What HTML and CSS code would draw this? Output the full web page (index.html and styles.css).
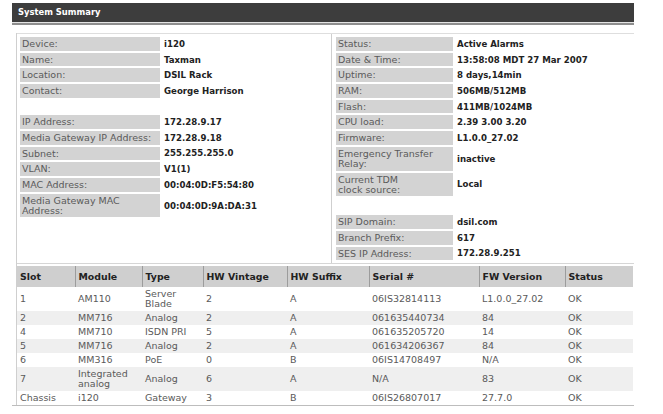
FILE: index.html
```html
<!DOCTYPE html>
<html lang="en">
<head>
  <meta charset="UTF-8" />
  <title>System Summary</title>
  <link rel="stylesheet" href="styles.css">
</head>
<body>
  <div class="page">
    <!-- Title bar -->
    <div class="title-bar">System Summary</div>
    <div class="title-rule"></div>

    <div class="content">
      <!-- Summary panel -->
      <div class="summary">
        <div class="info-col left">
          <div class="label">Device:</div><div class="value">i120</div>
          <div class="label">Name:</div><div class="value">Taxman</div>
          <div class="label">Location:</div><div class="value">DSIL Rack</div>
          <div class="label">Contact:</div><div class="value">George Harrison</div>
          <div class="blank"></div>
          <div class="label">IP Address:</div><div class="value">172.28.9.17</div>
          <div class="label">Media Gateway IP Address:</div><div class="value">172.28.9.18</div>
          <div class="label">Subnet:</div><div class="value">255.255.255.0</div>
          <div class="label">VLAN:</div><div class="value">V1(1)</div>
          <div class="label">MAC Address:</div><div class="value">00:04:0D:F5:54:80</div>
          <div class="label">Media Gateway MAC Address:</div><div class="value">00:04:0D:9A:DA:31</div>
        </div>

        <div class="info-col right">
          <div class="label">Status:</div><div class="value">Active Alarms</div>
          <div class="label">Date &amp; Time:</div><div class="value">13:58:08 MDT 27 Mar 2007</div>
          <div class="label">Uptime:</div><div class="value">8 days,14min</div>
          <div class="label">RAM:</div><div class="value">506MB/512MB</div>
          <div class="label">Flash:</div><div class="value">411MB/1024MB</div>
          <div class="label">CPU load:</div><div class="value">2.39 3.00 3.20</div>
          <div class="label">Firmware:</div><div class="value">L1.0.0_27.02</div>
          <div class="label">Emergency Transfer Relay:</div><div class="value">inactive</div>
          <div class="label">Current TDM<br>clock source:</div><div class="value">Local</div>
          <div class="blank"></div>
          <div class="label">SIP Domain:</div><div class="value">dsil.com</div>
          <div class="label">Branch Prefix:</div><div class="value">617</div>
          <div class="label">SES IP Address:</div><div class="value">172.28.9.251</div>
        </div>
      </div>

      <!-- Modules table -->
      <table class="modules">
        <colgroup>
          <col style="width:58px"><col style="width:67px"><col style="width:61px"><col style="width:84px">
          <col style="width:82px"><col style="width:110px"><col style="width:86px"><col style="width:68px">
        </colgroup>
        <thead>
          <tr>
            <th>Slot</th><th>Module</th><th>Type</th><th>HW Vintage</th>
            <th>HW Suffix</th><th>Serial #</th><th>FW Version</th><th>Status</th>
          </tr>
        </thead>
        <tbody>
          <tr><td>1</td><td>AM110</td><td>Server<br>Blade</td><td>2</td><td>A</td><td>06IS32814113</td><td>L1.0.0_27.02</td><td>OK</td></tr>
          <tr><td>2</td><td>MM716</td><td>Analog</td><td>2</td><td>A</td><td>061635440734</td><td>84</td><td>OK</td></tr>
          <tr><td>4</td><td>MM710</td><td>ISDN PRI</td><td>5</td><td>A</td><td>061635205720</td><td>14</td><td>OK</td></tr>
          <tr><td>5</td><td>MM716</td><td>Analog</td><td>2</td><td>A</td><td>061634206367</td><td>84</td><td>OK</td></tr>
          <tr><td>6</td><td>MM316</td><td>PoE</td><td>0</td><td>B</td><td>06IS14708497</td><td>N/A</td><td>OK</td></tr>
          <tr><td>7</td><td>Integrated<br>analog</td><td>Analog</td><td>6</td><td>A</td><td>N/A</td><td>83</td><td>OK</td></tr>
          <tr><td>Chassis</td><td>i120</td><td>Gateway</td><td>3</td><td>B</td><td>06IS26807017</td><td>27.7.0</td><td>OK</td></tr>
        </tbody>
      </table>
    </div>
    <div class="bottom-rule"></div>
  </div>
</body>
</html>
```

FILE: styles.css
```css
body {
  margin: 0;
  background: #fff;
  font-family: 'DejaVu Sans', Verdana, sans-serif;
  color: #333;
}

.page {
  width: 622px;
  margin: 3px 0 0 12px;
}

/* Title bar */
.title-bar {
  height: 19px;
  line-height: 19px;
  padding-left: 6px;
  background: #3d3d3d;
  color: #fff;
  font-size: 8.4px;
  font-weight: bold;
}

.title-rule {
  height: 2px;
  border-top: 1px solid #e4e4e4;
  background: #8e8e8e;
}

.content {
  margin: 8px 0 0 4px;
  border-left: 1px solid #cfcfcf;
}

/* Summary panel */
.summary {
  display: grid;
  grid-template-columns: 314px 1fr;
  border-top: 1px solid #dedede;
  border-bottom: 1px solid #d6d6d6;
}

.info-col {
  display: grid;
  row-gap: 2px;
  column-gap: 3px;
  align-content: start;
  padding: 3px 3px 3px;
}

.info-col.left {
  grid-template-columns: 140px 1fr;
}

.info-col.right {
  grid-template-columns: 117px 1fr;
  border-left: 1px solid #cfcfcf;
  padding-left: 4px;
}

.label {
  background: #d3d3d3;
  color: #5a5a5a;
  font-size: 9.5px;
  line-height: 10px;
  padding: 2px 2px 1.7px;
}

.value {
  display: flex;
  align-items: center;
  color: #222;
  font-size: 8.6px;
  font-weight: bold;
  padding-left: 1px;
}

.blank {
  grid-column: 1 / -1;
  height: 13.5px;
}

.info-col.right .blank {
  height: 15px;
}

/* Modules table */
.modules {
  width: 616px;
  margin-top: 2px;
  border-collapse: collapse;
  table-layout: fixed;
}

.modules th {
  height: 21px;
  padding: 0 3px;
  background: #cfcfcf;
  border-left: 1px solid #9c9c9c;
  color: #222;
  font-size: 9.4px;
  font-weight: bold;
  text-align: left;
}

.modules th:first-child {
  border-left: none;
}

.modules td {
  padding: 2px 3px;
  line-height: 10px;
  color: #5a5a5a;
  font-size: 9.5px;
  vertical-align: middle;
}

.modules tbody tr:nth-child(even) {
  background: #efefef;
}

.bottom-rule {
  height: 1px;
  background: #bdbdbd;
}
```
